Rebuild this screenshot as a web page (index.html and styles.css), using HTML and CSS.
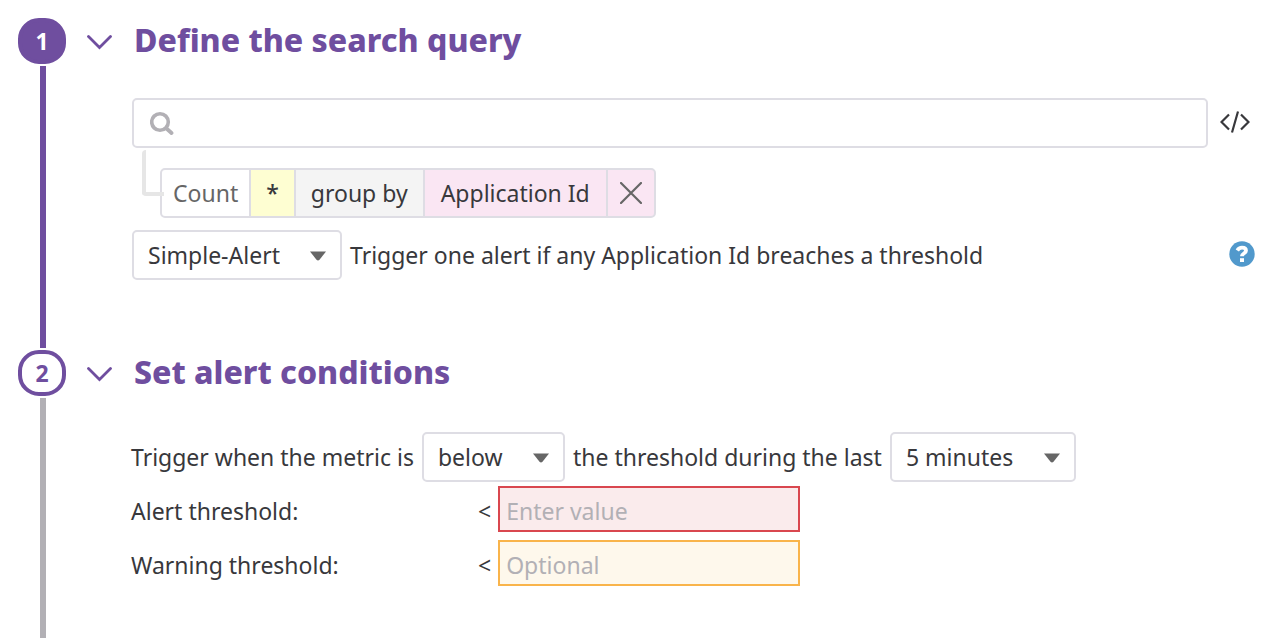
FILE: index.html
```html
<!DOCTYPE html>
<html lang="en">
<head>
<meta charset="utf-8">
<title>New log monitor</title>
<link rel="stylesheet" href="styles.css">
</head>
<body>
<main class="steps">
  <section class="step">
    <div class="rail">
      <span class="badge badge-done">1</span>
      <span class="line line-done"></span>
    </div>
    <div class="step-main">
      <header class="step-header">
        <button class="icon-button toggle" type="button" aria-label="Collapse search query">
          <svg width="26" height="16" viewBox="0 0 26 16"><path d="M2.500 2.500L13.500 13.500L24.500 2.500" fill="none" stroke="currentColor" stroke-width="2.800" stroke-linecap="round"/></svg>
        </button>
        <h2 class="title">Define the search query</h2>
      </header>
      <div class="step-body">
        <div class="search-row">
          <label class="search">
            <svg width="24" height="24" viewBox="0 0 24 24" aria-hidden="true"><circle cx="10" cy="11" r="8.300" fill="none" stroke="currentColor" stroke-width="3.600"/><path d="M16.500 17.500L21.500 22" stroke="currentColor" stroke-width="3.800" stroke-linecap="round"/></svg>
            <input class="search-input" type="text" aria-label="Search query">
          </label>
          <button class="icon-button code" type="button" aria-label="Edit as code">
            <svg width="30" height="22" viewBox="0 0 30 22"><path d="M9 3.500L1.500 11L9 18.500M21 3.500L28.500 11L21 18.500M18 .500L12 21.500" fill="none" stroke="currentColor" stroke-width="2.200"/></svg>
          </button>
        </div>
        <div class="group-row">
          <span class="connector"></span>
          <div class="chips">
            <span class="chip chip-measure">Count</span>
            <span class="chip chip-star">*</span>
            <span class="chip chip-by">group by</span>
            <span class="chip chip-facet">Application Id</span>
            <button class="chip chip-remove" type="button" aria-label="Remove group">
              <svg width="22" height="22" viewBox="0 0 22 22"><path d="M1 1L21 21M21 1L1 21" stroke="currentColor" stroke-width="2.200" stroke-linecap="round"/></svg>
            </button>
          </div>
        </div>
        <div class="sentence">
          <span class="picker">
            <select class="select" id="alert-type" aria-label="Alert type"><option>Simple-Alert</option></select>
            <svg class="arrow" width="16" height="10" viewBox="0 0 16 10" aria-hidden="true"><path d="M0 .500H16L9.500 8.800Q8 10.200 6.500 8.800Z" fill="currentColor"/></svg>
          </span>
          <label for="alert-type">Trigger one alert if any Application Id breaches a threshold</label>
          <button class="icon-button help" type="button" aria-label="Help">
            <svg width="26" height="26" viewBox="0 0 26 26"><circle cx="13" cy="13" r="12.700" fill="currentColor"/><path d="M8.300 9.500C9.500 7.500 11 6.700 13 6.700C15.500 6.700 17 8 17 9.800C17 12.400 13 12.100 13 15.300" fill="none" stroke="#fff" stroke-width="3.800"/><path d="M11 17.200H15V21H11Z" fill="#fff"/></svg>
          </button>
        </div>
      </div>
    </div>
  </section>

  <section class="step step-last">
    <div class="rail">
      <span class="badge">2</span>
      <span class="line"></span>
    </div>
    <div class="step-main">
      <header class="step-header">
        <button class="icon-button toggle" type="button" aria-label="Collapse alert conditions">
          <svg width="26" height="16" viewBox="0 0 26 16"><path d="M2.500 2.500L13.500 13.500L24.500 2.500" fill="none" stroke="currentColor" stroke-width="2.800" stroke-linecap="round"/></svg>
        </button>
        <h2 class="title">Set alert conditions</h2>
      </header>
      <div class="step-body">
        <div class="sentence">
          <label for="comparison">Trigger when the metric is</label>
          <span class="picker">
            <select class="select" id="comparison"><option>below</option></select>
            <svg class="arrow" width="16" height="10" viewBox="0 0 16 10" aria-hidden="true"><path d="M0 .500H16L9.500 8.800Q8 10.200 6.500 8.800Z" fill="currentColor"/></svg>
          </span>
          <label for="window">the threshold during the last</label>
          <span class="picker">
            <select class="select" id="window"><option>5 minutes</option></select>
            <svg class="arrow" width="16" height="10" viewBox="0 0 16 10" aria-hidden="true"><path d="M0 .500H16L9.500 8.800Q8 10.200 6.500 8.800Z" fill="currentColor"/></svg>
          </span>
        </div>
        <div class="thresholds">
          <label class="threshold-text" for="alert-value">Alert threshold:</label>
          <span class="threshold-text">&lt;</span>
          <input class="value value-alert" id="alert-value" type="text" placeholder="Enter value">
          <label class="threshold-text" for="warning-value">Warning threshold:</label>
          <span class="threshold-text">&lt;</span>
          <input class="value value-warning" id="warning-value" type="text" placeholder="Optional">
        </div>
      </div>
    </div>
  </section>
</main>
</body>
</html>
```

FILE: styles.css
```css
* {
  box-sizing: border-box;
}

body {
  margin: 0;
  background: #fff;
  color: #38383c;
  font: 23px/32px "Noto Sans", sans-serif;
}

input,
select,
button {
  margin: 0;
  color: inherit;
  font: inherit;
}

svg {
  display: block;
}

.steps {
  display: flex;
  flex-direction: column;
  min-height: 100vh;
  padding: 18px 21px 0 18px;
}

.step {
  display: flex;
  gap: 20px;
}

.step-last {
  flex: 1;
}

.rail {
  display: flex;
  flex-direction: column;
  gap: 2px;
  width: 48px;
}

.badge {
  display: flex;
  align-items: center;
  justify-content: center;
  height: 46px;
  border: 4px solid #6f4e9f;
  border-radius: 21px;
  color: #6f4e9f;
  font-weight: 700;
}

.badge-done {
  background: #6f4e9f;
  color: #fff;
}

.line {
  flex: 1;
  width: 6px;
  margin-left: 22px;
  background: #b2b0b5;
}

.line-done {
  margin-bottom: 2px;
  background: #6f4e9f;
}

.step-main {
  flex: 1;
  min-width: 0;
}

.step-header {
  display: flex;
  align-items: center;
  gap: 22px;
  height: 46px;
  color: #6f4e9f;
}

.title {
  margin: 0;
  padding-bottom: 2px;
  font-size: 32px;
  font-weight: 800;
  line-height: 44px;
}

.icon-button {
  padding: 0;
  border: 0;
  background: none;
  cursor: pointer;
}

.toggle {
  padding-top: 2px;
}

.step-body {
  padding: 34px 0 70px 46px;
}

.step-last .step-body {
  padding: 36px 0 52px 45px;
}

.search-row {
  display: flex;
  align-items: center;
  gap: 12px;
}

.search {
  display: flex;
  flex: 1;
  align-items: center;
  gap: 12px;
  height: 50px;
  padding: 0 16px;
  border: 2px solid #dedde4;
  border-radius: 5px;
  color: #b2b0b5;
}

.search-input {
  flex: 1;
  min-width: 0;
  border: 0;
  outline: 0;
  background: none;
  color: #38383c;
}

.code {
  width: 35px;
  padding-bottom: 2px;
}

.group-row {
  display: flex;
  align-items: flex-start;
  padding: 2px 0 12px 10px;
}

.connector {
  z-index: 1;
  width: 22px;
  height: 46px;
  margin-right: -4px;
  border: solid #e6e6e6;
  border-width: 0 0 4px 4px;
  border-radius: 4px 0 0 4px;
}

.chips {
  display: flex;
  gap: 2px;
  height: 50px;
  margin-top: 18px;
  overflow: hidden;
  border: 2px solid #dedde4;
  border-radius: 5px;
  background: #dedde4;
}

.chip {
  display: flex;
  align-items: center;
  padding: 0 15px;
}

.chip-measure {
  padding: 0 11px;
  background: #fff;
  color: #666;
}

.chip-star {
  background: #fefed2;
  font-weight: 500;
}

.chip-by {
  background: #f4f4f4;
}

.chip-facet,
.chip-remove {
  background: #fae6f3;
}

.chip-facet {
  padding: 0 16px;
}

.chip-remove {
  padding: 0 12px;
  border: 0;
  color: #666;
  cursor: pointer;
}

.sentence {
  display: flex;
  align-items: center;
  gap: 8px;
}

.picker {
  display: grid;
  align-items: center;
}

.select {
  grid-area: 1 / 1;
  height: 50px;
  padding: 0 60px 0 14px;
  appearance: none;
  border: 2px solid #dedde4;
  border-radius: 5px;
  background: #fff;
}

.arrow {
  grid-area: 1 / 1;
  justify-self: end;
  margin: 2px 16px 0 0;
  color: #666;
  pointer-events: none;
}

.help {
  margin-left: auto;
  padding-bottom: 2px;
  color: #5199cc;
}

.thresholds {
  display: grid;
  grid-template-columns: 347px auto 309px;
  align-items: center;
  justify-content: start;
  row-gap: 8px;
  padding-top: 4px;
}

.threshold-text {
  padding-top: 4px;
}

.value {
  height: 46px;
  margin-left: 7px;
  padding: 4px 6px 0;
  border: 2px solid #d9474f;
  border-radius: 0;
  background: #faebec;
}

.value-warning {
  border-color: #f9b44b;
  background: #fef8ec;
}

.value::placeholder {
  color: #b2b0b5;
  opacity: 1;
}
```
